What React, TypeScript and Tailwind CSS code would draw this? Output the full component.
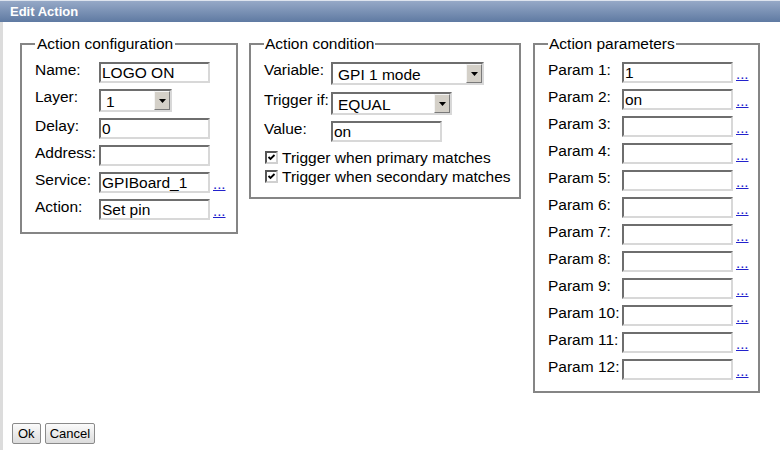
import React from "react";

const font = "font-['Liberation_Sans',Arial,sans-serif]";

function TextBox({ value, className }: { value?: string; className: string }) {
  return (
    <div
      className={`h-[21px] border-2 border-t-[#6e6e6e] border-l-[#6e6e6e] border-r-[#d8d8d8] border-b-[#d8d8d8] bg-white pl-[1px] text-[15.5px] leading-[17px] text-black whitespace-nowrap overflow-hidden ${className}`}
    >
      {value}
    </div>
  );
}

function SelectBox({ value, className }: { value: string; className: string }) {
  return (
    <div
      className={`flex h-[23px] border-2 border-t-[#6e6e6e] border-l-[#6e6e6e] border-r-[#d8d8d8] border-b-[#d8d8d8] bg-white ${className}`}
    >
      <div className="flex-1 overflow-hidden whitespace-nowrap pl-[5px] pt-[3px] text-[15.5px] leading-[16px] text-black">
        {value}
      </div>
      <div className="flex h-[19px] w-[16px] items-center justify-center border border-t-[#f4f4f4] border-l-[#f4f4f4] border-r-[#7a7a7a] border-b-[#7a7a7a] bg-[#d4d0c8]">
        <svg width="7" height="4" viewBox="0 0 7 4">
          <polygon points="0,0 7,0 3.5,4" fill="#000" />
        </svg>
      </div>
    </div>
  );
}

function Dots() {
  return (
    <span className="mb-[1px] self-end pl-[3px] text-[15px] leading-[17px] text-[#2222cc] underline">
      ...
    </span>
  );
}

function Label({ text }: { text: string }) {
  return <span className="-mt-[1px] self-start whitespace-nowrap text-[15.5px] leading-[17px]">{text}</span>;
}

function CheckRow({ text }: { text: string }) {
  return (
    <div className="flex h-[19px] items-center gap-[4px] pl-[1px] text-[15.5px] leading-[19px]">
      <span className="flex h-[13px] w-[13px] items-center justify-center border-2 border-t-[#555] border-l-[#555] border-r-[#d0d0d0] border-b-[#d0d0d0] bg-white">
        <svg width="9" height="9" viewBox="0 0 9 9">
          <path d="M1.5 4 L3.5 6 L7.5 2" stroke="#000" strokeWidth="1.8" fill="none" />
        </svg>
      </span>
      <span className="whitespace-nowrap">{text}</span>
    </div>
  );
}

const fieldset = "border-2 border-[#858585] pl-[13px] pt-[10px]";
const legend = "bg-white text-[15.5px] leading-[17px]";

export default function App() {
  const params = Array.from({ length: 12 }, (_, i) => ({
    label: `Param ${i + 1}:`,
    value: i === 0 ? "1" : i === 1 ? "on" : "",
  }));

  return (
    <div className={`h-[450px] w-[780px] overflow-hidden bg-white text-black ${font}`}>
      {/* Title bar */}
      <div className="h-[22px] border-t border-[#dde4ee] bg-gradient-to-b from-[#96a9c7] to-[#5f7aa2] pl-[10px] pt-[1px] text-[13px] font-bold leading-[19px] text-white">
        Edit Action
      </div>

      <div className="h-[428px] border-l-[3px] border-[#dcdcdc] pt-[13px]">
        <div className="flex items-start pl-[17px]">
          {/* Action configuration */}
          <fieldset className={`${fieldset} w-[218px] pb-[12px]`}>
            <legend className={`${legend} px-[2px]`}>Action configuration</legend>
            <div className="grid grid-cols-[64px_111px_auto] gap-y-[6px]">
              <Label text="Name:" />
              <TextBox value="LOGO ON" className="w-[111px]" />
              <span />
              <Label text="Layer:" />
              <SelectBox value="1" className="w-[73px]" />
              <span />
              <Label text="Delay:" />
              <TextBox value="0" className="w-[111px]" />
              <span />
              <Label text="Address:" />
              <TextBox className="w-[111px]" />
              <span />
              <Label text="Service:" />
              <TextBox value="GPIBoard_1" className="w-[111px]" />
              <Dots />
              <Label text="Action:" />
              <TextBox value="Set pin" className="w-[111px]" />
              <Dots />
            </div>
          </fieldset>

          {/* Action condition */}
          <fieldset className={`${fieldset} ml-[11px] w-[272px] pb-[11px]`}>
            <legend className={`${legend} px-[1px]`}>Action condition</legend>
            <div className="grid grid-cols-[67px_auto] gap-y-[6px]">
              <Label text="Variable:" />
              <SelectBox value="GPI 1 mode" className="mb-[1px] w-[153px]" />
              <Label text="Trigger if:" />
              <SelectBox value="EQUAL" className="h-[22px] w-[121px]" />
              <Label text="Value:" />
              <TextBox value="on" className="w-[111px]" />
            </div>
            <div className="mt-[6px]">
              <CheckRow text="Trigger when primary matches" />
              <CheckRow text="Trigger when secondary matches" />
            </div>
          </fieldset>

          {/* Action parameters */}
          <fieldset className={`${fieldset} ml-[12px] w-[227px] pb-[11px]`}>
            <legend className={`${legend} px-[1px]`}>Action parameters</legend>
            <div className="grid grid-cols-[74px_111px_auto] gap-y-[6px]">
              {params.map((p) => (
                <React.Fragment key={p.label}>
                  <Label text={p.label} />
                  <TextBox value={p.value} className="w-[111px]" />
                  <Dots />
                </React.Fragment>
              ))}
            </div>
          </fieldset>
        </div>

        {/* Buttons */}
        <div className="mt-[30px] flex gap-[4px] pl-[9px]">
          <button className="h-[21px] rounded-[2px] border border-[#8a8a8a] bg-gradient-to-b from-[#fbfbfb] to-[#dcdcdc] px-[5px] text-[13px] leading-[19px] text-black">
            Ok
          </button>
          <button className="h-[21px] rounded-[2px] border border-[#8a8a8a] bg-gradient-to-b from-[#fbfbfb] to-[#dcdcdc] px-[4px] text-[13px] leading-[19px] text-black">
            Cancel
          </button>
        </div>
      </div>
    </div>
  );
}
